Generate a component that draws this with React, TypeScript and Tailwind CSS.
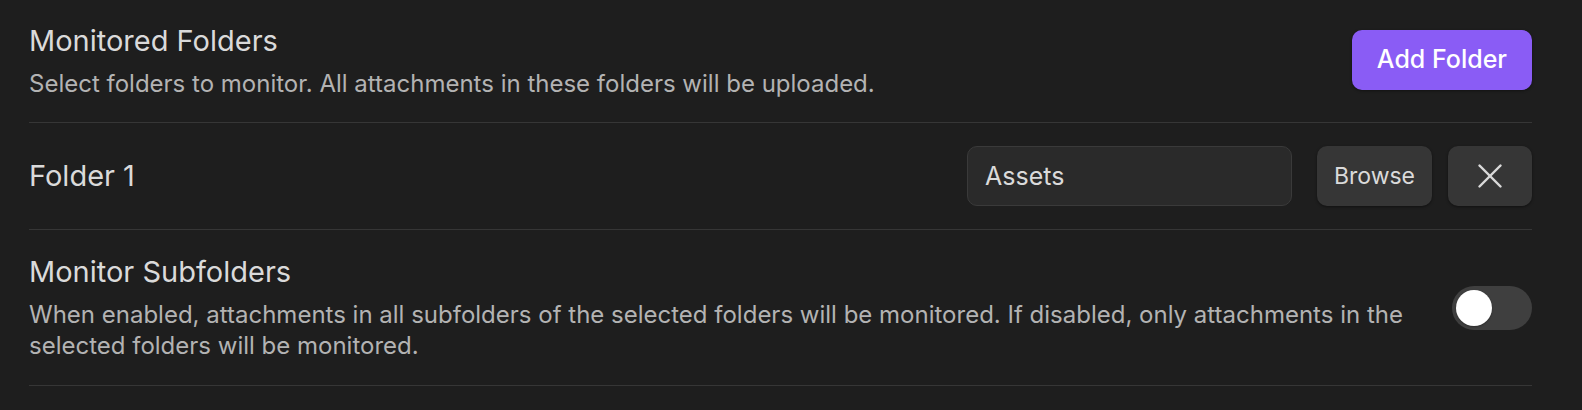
import { X } from "lucide-react";

const font = { fontFamily: "Inter, 'Noto Sans', sans-serif" };

export default function App() {
  return (
    <div
      className="min-h-[410px] w-full bg-[#1e1e1e] pl-[29px] pr-[50px] antialiased"
      style={font}
    >
      <div className="flex items-center border-b border-[#363636] py-[23px]">
        <div className="mr-4 flex flex-1 flex-col gap-[9px]">
          <div className="text-[29px] leading-[36px] text-[#dadada]">
            Monitored Folders
          </div>
          <div className="text-[24px] leading-[31px] text-[#b3b3b3]">
            Select folders to monitor. All attachments in these folders will be
            uploaded.
          </div>
        </div>
        <button className="-mt-[3px] h-[60px] rounded-[10px] bg-[#8a5cf5] px-[25px] text-[25px] font-medium text-white shadow-[0_1px_3px_rgba(0,0,0,0.4)]">
          Add Folder
        </button>
      </div>

      <div className="flex items-center border-b border-[#363636] py-[23px]">
        <div className="flex-1 text-[29px] leading-[36px] text-[#dadada]">
          Folder 1
        </div>
        <div className="flex items-center">
          <input
            defaultValue="Assets"
            className="h-[60px] w-[325px] rounded-[10px] border border-[#3a3a3a] bg-[#2a2a2a] px-[17px] text-[25px] text-[#dadada] outline-none"
            style={font}
          />
          <button className="ml-[25px] h-[60px] w-[115px] rounded-[10px] bg-[#363636] text-[23px] text-[#dadada] shadow-[0_1px_3px_rgba(0,0,0,0.45)]">
            Browse
          </button>
          <button className="ml-4 flex h-[60px] w-[84px] items-center justify-center rounded-[10px] bg-[#363636] text-[#dadada] shadow-[0_1px_3px_rgba(0,0,0,0.45)]">
            <X size={42} strokeWidth={1.4} />
          </button>
        </div>
      </div>

      <div className="flex items-center border-b border-[#363636] py-[24px]">
        <div className="mr-4 flex flex-1 flex-col gap-[9px]">
          <div className="text-[29px] leading-[36px] text-[#dadada]">
            Monitor Subfolders
          </div>
          <div className="text-[24px] leading-[31px] text-[#b3b3b3]">
            When enabled, attachments in all subfolders of the selected folders
            will be monitored. If disabled, only attachments in the selected
            folders will be monitored.
          </div>
        </div>
        <div className="flex h-[44px] w-[80px] shrink-0 items-center rounded-full bg-[#3f3f3f] px-[4px]">
          <div className="h-[36px] w-[36px] rounded-full bg-white shadow-[0_1px_2px_rgba(0,0,0,0.3)]" />
        </div>
      </div>
    </div>
  );
}
